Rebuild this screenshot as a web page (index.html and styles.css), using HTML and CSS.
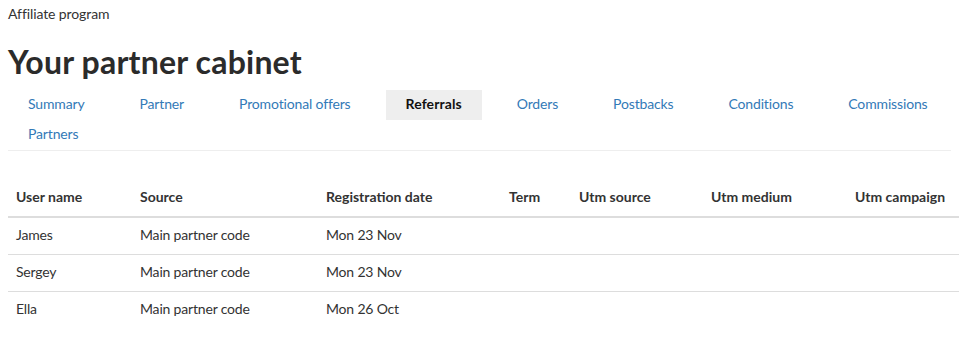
FILE: index.html
```html
<!DOCTYPE html>
<html lang="en">
<head>
<meta charset="utf-8">
<title>Your partner cabinet</title>
<link rel="stylesheet" href="styles.css">
</head>
<body>
<div class="page">
  <div class="breadcrumb">Affiliate program</div>
  <h1 class="title">Your partner cabinet</h1>
  <nav class="tabs">
    <a class="tab" href="#">Summary</a>
    <a class="tab" href="#">Partner</a>
    <a class="tab" href="#">Promotional offers</a>
    <a class="tab active" href="#">Referrals</a>
    <a class="tab" href="#">Orders</a>
    <a class="tab" href="#">Postbacks</a>
    <a class="tab" href="#">Conditions</a>
    <a class="tab" href="#">Commissions</a>
    <a class="tab" href="#">Partners</a>
  </nav>
  <table class="grid">
    <colgroup>
      <col class="c1"><col class="c2"><col class="c3"><col class="c4"><col class="c5"><col class="c6"><col class="c7">
    </colgroup>
    <thead>
      <tr>
        <th>User name</th>
        <th>Source</th>
        <th>Registration date</th>
        <th>Term</th>
        <th>Utm source</th>
        <th>Utm medium</th>
        <th>Utm campaign</th>
      </tr>
    </thead>
    <tbody>
      <tr><td>James</td><td>Main partner code</td><td>Mon 23 Nov</td><td></td><td></td><td></td><td></td></tr>
      <tr><td>Sergey</td><td>Main partner code</td><td>Mon 23 Nov</td><td></td><td></td><td></td><td></td></tr>
      <tr><td>Ella</td><td>Main partner code</td><td>Mon 26 Oct</td><td></td><td></td><td></td><td></td></tr>
    </tbody>
  </table>
</div>
</body>
</html>
```
FILE: styles.css
```css
html, body {
  margin: 0;
  padding: 0;
  background: #fff;
}
body {
  font-family: "Lato", "Liberation Sans", sans-serif;
  font-size: 14px;
  line-height: 20px;
  color: #333;
}
.page {
  padding: 4px 8px 0 8px;
}
.breadcrumb {
  font-size: 14px;
  line-height: 20px;
  letter-spacing: -0.1px;
}
.title {
  margin: 18px 0 0 0;
  font-size: 32px;
  line-height: 40px;
  font-weight: 700;
  letter-spacing: 0.2px;
  color: #2b2b2b;
}
.tabs {
  display: flex;
  flex-wrap: wrap;
  column-gap: 15px;
  margin-top: 8px;
  border-bottom: 1px solid #eee;
}
.tab {
  display: block;
  padding: 4px 20px 6px 20px;
  line-height: 20px;
  letter-spacing: -0.15px;
  color: #337ab7;
  text-decoration: none;
}
.tab.active {
  background: #eee;
  color: #111;
  font-weight: 700;
  letter-spacing: 0.1px;
}
.grid {
  margin-top: 29px;
  width: 951px;
  border-collapse: collapse;
  table-layout: fixed;
}
.c1 { width: 124px; }
.c2 { width: 186px; }
.c3 { width: 183px; }
.c4 { width: 70px; }
.c5 { width: 132px; }
.c6 { width: 144px; }
.c7 { width: 112px; }
.grid th, .grid td {
  padding: 7px 8px 9px 8px;
  line-height: 20px;
  text-align: left;
  white-space: nowrap;
}
.grid td {
  letter-spacing: -0.18px;
}
.grid th {
  font-weight: 700;
  border-bottom: 2px solid #ddd;
}
.grid td {
  border-bottom: 1px solid #ddd;
}
.grid tbody tr:last-child td {
  border-bottom: none;
}
```
